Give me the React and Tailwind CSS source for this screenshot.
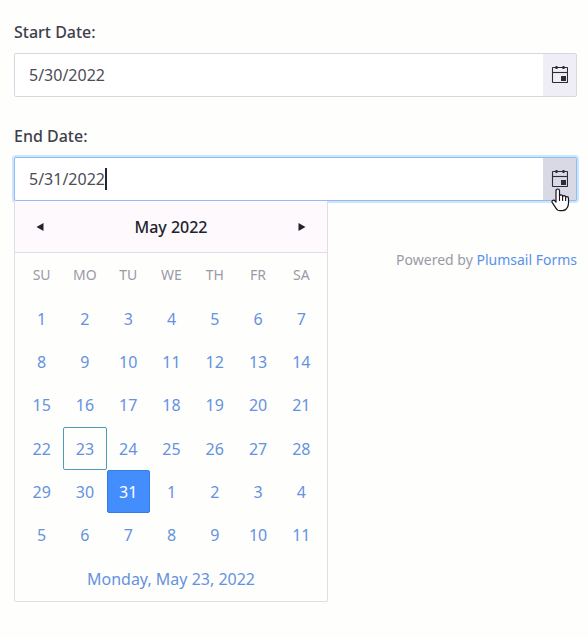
import { useState } from 'react';
import clsx from 'clsx';

const WEEKDAYS = ['SU', 'MO', 'TU', 'WE', 'TH', 'FR', 'SA'];

const WEEKS = [
  [1, 2, 3, 4, 5, 6, 7],
  [8, 9, 10, 11, 12, 13, 14],
  [15, 16, 17, 18, 19, 20, 21],
  [22, 23, 24, 25, 26, 27, 28],
  [29, 30, 31, 1, 2, 3, 4],
  [5, 6, 7, 8, 9, 10, 11],
];

// Week and weekday index of a cell, e.g. "3-1" is Monday of the fourth week
const TODAY = '3-1';

const CalendarIcon = () => (
  <svg width="17" height="18" viewBox="0 0 17 18" fill="none" stroke="#2c2c38" aria-hidden="true">
    <rect x="1.5" y="1.5" width="15" height="15" rx="0.5" strokeWidth="1.1" />
    <path d="M1.5 6.5h15" strokeWidth="1.1" />
    <path d="M5.500 0v3M12.500 0v3" strokeWidth="2" />
    <rect x="10" y="10" width="5" height="5" fill="#2c2c38" stroke="none" />
  </svg>
);

const HandCursor = () => (
  <svg
    className="pointer-events-none absolute top-[30px] left-2 z-20"
    width="19"
    height="24"
    viewBox="0 0 19 24"
    aria-hidden="true"
  >
    <path
      d="M5 14V2.8C5 1.6 5.8 1 6.7 1s1.8.6 1.8 1.8v5.1c.2-.7.8-1 1.5-1 .9 0 1.6.6 1.6 1.6.3-.5.8-.8 1.4-.8.9 0 1.6.6 1.6 1.6.3-.4.7-.6 1.2-.6 1 0 1.7.7 1.7 1.8V15c0 2-.5 3.3-1.2 4.500-.9 1.700-2.300 3.200-4.800 3.200H9.300c-2.300 0-3.700-1.200-4.700-3L1.300 14.600c-.5-.9-.3-1.700.3-2.200.8-.6 1.700-.4 2.300.4L5 14z"
      fill="#fff"
      stroke="#15151c"
      strokeWidth="1.2"
      strokeLinejoin="round"
    />
    <path d="M8.500 8v4.500M11.600 8.500v4M14.600 9.500v3" stroke="#15151c" strokeWidth="1.1" strokeLinecap="round" />
  </svg>
);

const DateField = ({ id, label, value, onChange, focused, children }) => (
  <div className="mb-[27px]">
    <label htmlFor={id} className="mb-[9px] block w-fit font-medium text-[#3f3f4b]">
      {label}
    </label>
    <div
      className={clsx(
        'relative flex h-11 rounded-xs border bg-white',
        focused ? 'border-[#8fbdf0] ring-2 ring-[#cfe5fd]' : 'border-[#d7d7df]'
      )}
    >
      <input
        id={id}
        type="text"
        value={value}
        onChange={(e) => onChange(e.target.value)}
        className={clsx(
          'min-w-0 flex-1 bg-transparent px-[14px] text-[#4c4c56] outline-none',
          focused && 'caret-transparent'
        )}
      />
      {focused && <span className="absolute top-[10px] left-[90px] h-[22px] w-[2px] bg-[#25252f]" />}
      <div className="relative flex">
        <button
          type="button"
          aria-label="Open calendar"
          className={clsx('flex w-[33px] items-center justify-center', focused ? 'bg-[#d9d9e5]' : 'bg-[#efedf5]')}
        >
          <CalendarIcon />
        </button>
        {focused && <HandCursor />}
      </div>
      {children}
    </div>
  </div>
);

const Calendar = ({ selected, onSelect }) => (
  <div className="absolute top-full -left-px z-10 mt-px w-[314px] rounded-b-xs border border-t-0 border-[#dedee5] bg-[#fefefd]">
    {/* Month navigation */}
    <div className="flex h-[52px] items-center justify-between border-b border-[#dedee8] bg-[#fdf9fc] px-[15px] text-[#22222c]">
      <button type="button" aria-label="Previous month" className="flex size-5 items-center justify-center">
        <svg width="8" height="8" viewBox="0 0 8 8" fill="currentColor">
          <path d="M7.500 0v8L0.500 4z" />
        </svg>
      </button>
      <button type="button" className="font-medium">May 2022</button>
      <button type="button" aria-label="Next month" className="flex size-5 items-center justify-center">
        <svg width="8" height="8" viewBox="0 0 8 8" fill="currentColor">
          <path d="M0.500 0v8l7-4z" />
        </svg>
      </button>
    </div>

    {/* Days */}
    <div className="pr-1 pl-[5px]">
      <table className="h-[304px] w-full table-fixed border-collapse text-center">
        <thead>
          <tr>
            {WEEKDAYS.map((day) => (
              <th key={day} scope="col" className="h-11 p-0 text-sm font-normal text-[#9a9aa6]">
                {day}
              </th>
            ))}
          </tr>
        </thead>
        <tbody>
          {WEEKS.map((week, w) => (
            <tr key={w}>
              {week.map((day, d) => {
                const key = `${w}-${d}`;
                return (
                  <td key={key} className="h-[43px] p-0">
                    <button
                      type="button"
                      onClick={() => onSelect(key)}
                      className={clsx(
                        'h-[43px] w-full rounded-xs border',
                        key === selected
                          ? 'border-[#347be4] bg-[#438dfc] text-white'
                          : key === TODAY
                            ? 'border-[#4f9bb8] text-[#6592e0]'
                            : 'border-transparent text-[#6592e0]'
                      )}
                    >
                      {day}
                    </button>
                  </td>
                );
              })}
            </tr>
          ))}
        </tbody>
      </table>
    </div>

    {/* Today link */}
    <div className="flex h-11 items-center justify-center">
      <a href="#today" className="text-[#6592e0]">Monday, May 23, 2022</a>
    </div>
  </div>
);

const App = () => {
  const [startDate, setStartDate] = useState('5/30/2022');
  const [endDate, setEndDate] = useState('5/31/2022');
  const [selected, setSelected] = useState('4-2');

  return (
    <div className="min-h-screen bg-[#fefefd] pt-5 pr-[11px] pl-[14px] font-['Noto_Sans','Open_Sans',sans-serif] text-base">
      <DateField id="start-date" label="Start Date:" value={startDate} onChange={setStartDate} />
      <DateField id="end-date" label="End Date:" value={endDate} onChange={setEndDate} focused>
        <Calendar selected={selected} onSelect={setSelected} />
      </DateField>
      <p className="mt-[49px] text-right text-sm text-[#9a9aa6]">
        Powered by{' '}
        <a href="#plumsail" className="text-[#5a90ea]">Plumsail Forms</a>
      </p>
    </div>
  );
};

export default App;
